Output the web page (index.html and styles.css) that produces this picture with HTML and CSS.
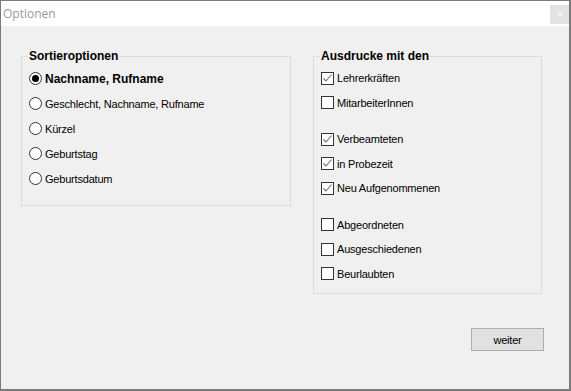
FILE: index.html
```html
<!DOCTYPE html>
<html lang="de">
  <head>
    <meta charset="UTF-8" />
    <meta name="viewport" content="width=device-width, initial-scale=1.0" />
    <title>Optionen</title>
    <link rel="stylesheet" href="styles.css">
  </head>
  <body>
    <div class="window">
      <div class="title-bar">
        <span class="title">Optionen</span>
        <span class="close-btn">&#x2715;</span>
      </div>

      <div class="content">
        <div class="groups">
          <div class="group group-sort">
            <span class="legend">Sortieroptionen</span>
            <label class="row selected"><span class="radio checked"></span>Nachname, Rufname</label>
            <label class="row"><span class="radio"></span>Geschlecht, Nachname, Rufname</label>
            <label class="row"><span class="radio"></span>Kürzel</label>
            <label class="row"><span class="radio"></span>Geburtstag</label>
            <label class="row"><span class="radio"></span>Geburtsdatum</label>
          </div>

          <div class="group group-print">
            <span class="legend">Ausdrucke mit den</span>
            <div class="block">
              <label class="row"><span class="check checked"></span>Lehrerkräften</label>
              <label class="row"><span class="check"></span>MitarbeiterInnen</label>
            </div>
            <div class="block">
              <label class="row"><span class="check checked"></span>Verbeamteten</label>
              <label class="row"><span class="check checked"></span>in Probezeit</label>
              <label class="row"><span class="check checked"></span>Neu Aufgenommenen</label>
            </div>
            <div class="block">
              <label class="row"><span class="check"></span>Abgeordneten</label>
              <label class="row"><span class="check"></span>Ausgeschiedenen</label>
              <label class="row"><span class="check"></span>Beurlaubten</label>
            </div>
          </div>
        </div>

        <div class="footer">
          <button class="btn">weiter</button>
        </div>
      </div>
    </div>
  </body>
</html>
```

FILE: styles.css
```css
body {
  margin: 0;
  padding: 0;
  font-family: "Liberation Sans", Arial, sans-serif;
  font-size: 11px;
  letter-spacing: -0.2px;
  color: #000;
}
.window {
  width: 571px;
  height: 391px;
  box-sizing: border-box;
  border: 1px solid #7a7a7a;
  border-right-width: 2px;
  border-bottom-width: 2px;
  background-color: #f0f0f0;
  display: flex;
  flex-direction: column;
}
.title-bar {
  height: 25px;
  background-color: #fff;
  display: flex;
  align-items: center;
  justify-content: space-between;
  padding: 0 0 0 2px;
}
.title {
  color: #9a9a9a;
  font-family: "Open Sans", sans-serif;
  font-size: 12px;
  letter-spacing: 0;
}
.close-btn {
  width: 19px;
  height: 19px;
  margin-top: 1px;
  background-color: #e3e3e3;
  color: #f4f4f4;
  font-size: 10px;
  font-weight: bold;
  display: flex;
  align-items: center;
  justify-content: center;
}
.content {
  flex: 1;
  padding: 30px 25px 0 20px;
}
.groups {
  display: flex;
  gap: 22px;
  align-items: flex-start;
}
.group {
  position: relative;
  border: 1px solid #dcdcdc;
  padding: 9px 0 0 7px;
  box-sizing: border-box;
}
.group-sort {
  width: 270px;
  height: 150px;
}
.group-print {
  width: 229px;
  height: 238px;
}
.legend {
  position: absolute;
  top: -9px;
  left: 6px;
  padding: 0 1px;
  background-color: #f0f0f0;
  font-size: 12px;
  font-weight: bold;
  letter-spacing: 0;
  line-height: 16px;
}
.group-print .row {
  height: 24.5px;
}
.block + .block {
  margin-top: 12px;
}
.row {
  height: 25px;
  display: flex;
  align-items: center;
  gap: 3px;
}
.selected {
  font-size: 12px;
  font-weight: bold;
  letter-spacing: 0;
}
.radio {
  width: 11px;
  height: 11px;
  border: 1px solid #333;
  border-radius: 50%;
  background-color: #fff;
  display: flex;
  align-items: center;
  justify-content: center;
}
.radio.checked::after {
  content: "";
  width: 7px;
  height: 7px;
  border-radius: 50%;
  background-color: #000;
}
.check {
  width: 11px;
  height: 11px;
  border: 1px solid #333;
  background-color: #fff;
}
.check.checked {
  background-image: url("data:image/svg+xml,%3Csvg xmlns='http://www.w3.org/2000/svg' width='11' height='11'%3E%3Cpolyline points='1.5,5.5 4,8 9.5,1.5' fill='none' stroke='%23707070' stroke-width='1.1'/%3E%3C/svg%3E");
}
.footer {
  display: flex;
  justify-content: flex-end;
  margin-top: 34px;
}
.btn {
  width: 73px;
  height: 23px;
  border: 1px solid #adadad;
  background-color: #e1e1e1;
  font-family: inherit;
  font-size: 11px;
  letter-spacing: -0.2px;
  color: #000;
  padding: 0;
}
```
